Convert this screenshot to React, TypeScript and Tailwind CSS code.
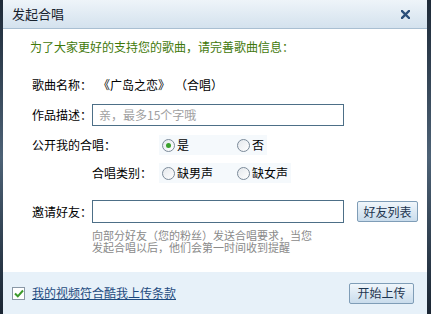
import React from "react";

const font = { fontFamily: '"Noto Sans CJK SC", "Liberation Sans", sans-serif' };

function Radio({ checked, label }: { checked?: boolean; label: string }) {
  return (
    <div className="flex items-center h-[20px] px-[3px] bg-[#f5f9fc]">
      <span className="w-[13px] h-[13px] rounded-full border border-[#7b8a99] bg-gradient-to-br from-[#e4e8ec] to-white flex items-center justify-center">
        {checked && <span className="w-[5px] h-[5px] rounded-full bg-[#3aa12c]" />}
      </span>
      <span className="ml-[2px] text-[12px] leading-[12px] text-black">{label}</span>
    </div>
  );
}

export default function App() {
  return (
    <div className="w-[431px] h-[314px] flex bg-gradient-to-b from-[#1e2a38] via-[#4d6276] to-[#1b2633] overflow-hidden" style={font}>
      <div className="ml-[3px] mr-[4px] flex-1 flex flex-col bg-white">
        <div className="h-[29px] shrink-0 flex items-center justify-between pl-[9px] pr-[17px] bg-gradient-to-b from-[#eef4f9] to-[#d4e2ee] border-b border-[#a9bfd2]">
          <span className="text-[13px] text-[#17222e]">发起合唱</span>
          <svg width="9" height="9" viewBox="0 0 9 9">
            <path d="M1 1 L8 8 M8 1 L1 8" stroke="#2b4f7a" strokeWidth="2.4" strokeLinecap="square" />
          </svg>
        </div>
        <div className="flex-1 flex flex-col pl-[27px]">
          <div className="mt-[10px] h-[16px] flex items-center text-[12px] text-[#3f780a]">
            为了大家更好的支持您的歌曲，请完善歌曲信息：
          </div>
          <div className="mt-[20px] h-[20px] flex items-center text-[12px] text-black pl-[2px]">
            <span className="w-[66px]">歌曲名称：</span>
            <span>《广岛之恋》</span>
            <span className="ml-[5px]">（合唱）</span>
          </div>
          <div className="mt-[9px] h-[22px] flex items-center text-[12px] text-black pl-[2px]">
            <span className="w-[60px]">作品描述：</span>
            <div className="w-[252px] h-[22px] border border-[#4d6f87] flex items-center pl-[6px] text-[#a0a0a0]">
              亲，最多15个字哦
            </div>
          </div>
          <div className="mt-[9px] h-[20px] flex items-center text-[12px] text-black pl-[2px]">
            <span className="w-[127px]">公开我的合唱：</span>
            <div className="w-[75px]"><Radio checked label="是" /></div>
            <Radio label="否" />
          </div>
          <div className="mt-[8px] h-[20px] flex items-center text-[12px] text-black pl-[62px]">
            <span className="w-[67px]">合唱类别：</span>
            <div className="w-[75px]"><Radio label="缺男声" /></div>
            <Radio label="缺女声" />
          </div>
          <div className="mt-[17px] h-[23px] flex items-center text-[12px] text-black pl-[2px]">
            <span className="w-[60px]">邀请好友：</span>
            <div className="w-[252px] h-[23px] border border-[#4d6f87]" />
            <button className="ml-[13px] w-[61px] h-[21px] rounded-[2px] border border-[#7f9db7] bg-gradient-to-b from-[#f0f6fb] to-[#c9dcec] text-[12px] text-[#1d3550] flex items-center justify-center">
              好友列表
            </button>
          </div>
          <p className="mt-[6px] ml-[62px] text-[11px] leading-[12px] text-[#8a8a8a]">
            向部分好友（您的粉丝）发送合唱要求，当您<br />发起合唱以后，他们会第一时间收到提醒
          </p>
          <div className="flex-1" />
        </div>
        <div className="h-[42px] shrink-0 bg-[#e7f1f9] flex items-center pl-[9px] pr-[13px]">
          <span className="w-[13px] h-[13px] border border-[#8a98a6] bg-white flex items-center justify-center">
            <svg width="10" height="9" viewBox="0 0 10 9">
              <path d="M1 4.5 L3.8 7.3 L9 1.5" stroke="#3c9a2a" strokeWidth="2" fill="none" />
            </svg>
          </span>
          <span className="ml-[7px] text-[12px] text-[#1e4b80] underline">我的视频符合酷我上传条款</span>
          <div className="flex-1" />
          <button className="w-[65px] h-[21px] rounded-[2px] border border-[#7f9db7] bg-gradient-to-b from-[#f0f6fb] to-[#c9dcec] text-[12px] text-[#1d3550] flex items-center justify-center">
            开始上传
          </button>
        </div>
      </div>
    </div>
  );
}
